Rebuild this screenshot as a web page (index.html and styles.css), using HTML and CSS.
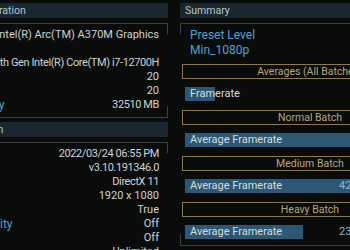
FILE: index.html
```html
<!DOCTYPE html>
<html>
<head>
	<title>Benchmark Results</title>
	<link rel="stylesheet" href="styles.css">
</head>
<body>
	<div class="page">
		<!-- left column: system and run info -->
		<div class="col col-left">
			<div class="panel-head">Hardware Configuration</div>
			<div class="panel-body info">
				<div class="row"><span class="lbl">Graphics</span><span class="val">Intel(R) Arc(TM) A370M Graphics</span></div>
				<div class="row"><span class="lbl">Processor</span><span class="val"></span></div>
				<div class="row"><span class="lbl">CPU</span><span class="val tight">12th Gen Intel(R) Core(TM) i7-12700H</span></div>
				<div class="row"><span class="lbl">Cores</span><span class="val">20</span></div>
				<div class="row"><span class="lbl">Threads</span><span class="val">20</span></div>
				<div class="row"><span class="lbl">Shared Memory</span><span class="val tight">32510 MB</span></div>
			</div>
			<div class="panel-head head-gap">Device Information</div>
			<div class="panel-body info">
				<div class="row"><span class="lbl">Date</span><span class="val tight">2022/03/24 06:55 PM</span></div>
				<div class="row"><span class="lbl">Version</span><span class="val tight">v3.10.191346.0</span></div>
				<div class="row"><span class="lbl">Graphics API</span><span class="val tight">DirectX 11</span></div>
				<div class="row"><span class="lbl">Resolution</span><span class="val">1920 x 1080</span></div>
				<div class="row"><span class="lbl">Fullscreen</span><span class="val">True</span></div>
				<div class="row"><span class="lbl">Upscaling Quality</span><span class="val">Off</span></div>
				<div class="row"><span class="lbl">Ray Tracing</span><span class="val">Off</span></div>
				<div class="row"><span class="lbl">Frame Limit</span><span class="val">Unlimited</span></div>
			</div>
		</div>

		<!-- right column: summary -->
		<div class="col col-right">
			<div class="panel-head">Summary</div>
			<div class="panel-body summary">
				<div class="preset">Preset Level</div>
				<div class="preset">Min_1080p</div>

				<div class="batch">Averages (All Batches)</div>
				<div class="bar-row">
					<div class="bar-fill" style="width: 30px"></div>
					<span class="bar-label">Framerate</span>
					<span class="bar-val"></span>
				</div>

				<div class="batch">Normal Batch</div>
				<div class="bar-row">
					<div class="bar-fill" style="width: 250px"></div>
					<span class="bar-label">Average Framerate</span>
					<span class="bar-val"></span>
				</div>

				<div class="batch">Medium Batch</div>
				<div class="bar-row">
					<div class="bar-fill" style="width: 230px"></div>
					<span class="bar-label">Average Framerate</span>
					<span class="bar-val">42.1</span>
				</div>

				<div class="batch">Heavy Batch</div>
				<div class="bar-row">
					<div class="bar-fill" style="width: 118px"></div>
					<span class="bar-label">Average Framerate</span>
					<span class="bar-val">23.4</span>
				</div>
			</div>
		</div>
	</div>
</body>
</html>
```

FILE: styles.css
```css
html, body {
	margin: 0;
	overflow: hidden;
	background-color: #0a0b0b;
}
body {
	font-family: Roboto, "Noto Sans", sans-serif;
	color: #cdd3d6;
}
.page {
	display: flex;
	gap: 12px;
	margin-left: -90px;
	padding-top: 3px;
}
.col {
	flex: none;
}
.col-left {
	width: 258px;
}
.col-right {
	width: 260px;
}

/* panel header bar */
.panel-head {
	height: 15px;
	line-height: 15px;
	padding-left: 5px;
	margin-bottom: 5px;
	background-color: #1b2730;
	color: #b3c6d0;
	font-size: 10.5px;
	white-space: nowrap;
}
.head-gap {
	margin-top: 4px;
}

/* box with top/bottom lines and short corner ticks */
.panel-body {
	border-top: 1px solid #3a4244;
	border-bottom: 1px solid #3a4244;
	background:
		linear-gradient(#3a4244, #3a4244) left top / 1px 10px no-repeat,
		linear-gradient(#3a4244, #3a4244) right top / 1px 10px no-repeat,
		linear-gradient(#3a4244, #3a4244) left bottom / 1px 11px no-repeat,
		linear-gradient(#3a4244, #3a4244) right bottom / 1px 11px no-repeat;
}
.info {
	padding: 4px 9px 5px 10px;
}
.row {
	display: flex;
	justify-content: space-between;
	height: 14px;
	line-height: 14px;
	white-space: nowrap;
}
.lbl {
	color: #4ea3d3;
	font-size: 12px;
}
.val {
	font-size: 11px;
	color: #cdd3d6;
}
/* number-heavy values, the original font has narrow digits */
.tight {
	letter-spacing: -0.4px;
}

/* summary */
.summary {
	padding: 4px 2px 6px 2px;
}
.preset {
	padding-left: 8px;
	height: 15px;
	line-height: 15px;
	font-size: 12px;
	color: #4ea3d3;
}
.batch {
	margin-top: 9px;
	height: 13px;
	line-height: 13px;
	border: 1px solid #8a7b4c;
	text-align: center;
	font-size: 10.5px;
	color: #b7a879;
	white-space: nowrap;
}
.preset + .batch {
	margin-top: 6px;
}
.bar-row {
	position: relative;
	display: flex;
	margin: 8px 3px 0 3px;
	height: 14px;
	line-height: 14px;
	font-size: 11px;
	white-space: nowrap;
}
.bar-fill {
	position: absolute;
	left: 0;
	top: 0;
	bottom: 0;
	background-color: #2d5875;
}
.bar-label {
	position: relative;
	flex: 1;
	padding-left: 5px;
	color: #d6dcdf;
}
.bar-val {
	position: relative;
	width: 96px;
	color: #8fb3cb;
}
```
